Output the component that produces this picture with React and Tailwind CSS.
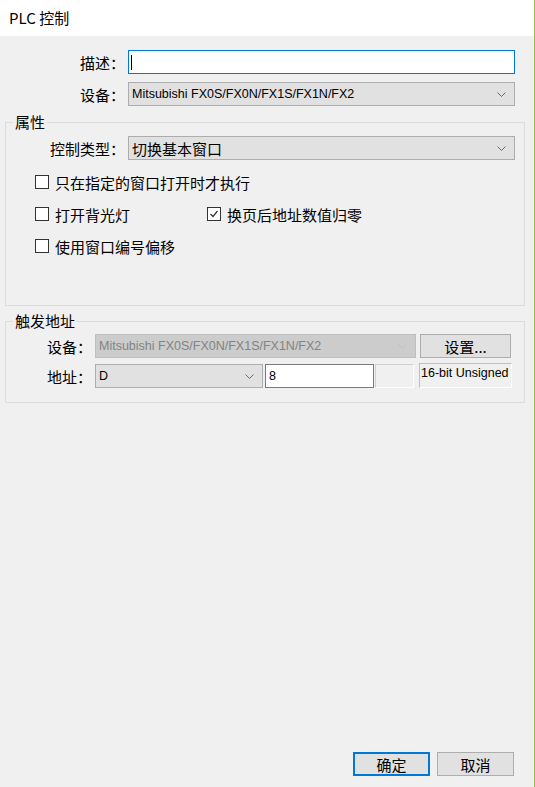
import React from 'react';

const Chevron = ({ color = '#6b6b6b' }) => (
    <svg width="9" height="5" viewBox="0 0 9 5" className="shrink-0">
        <path d="M0.5 0.5 L4.5 4.5 L8.5 0.5" fill="none" stroke={color} strokeWidth="1" />
    </svg>
);

const Combo = ({ value, width, disabled, cjk }) => (
    <div
        className={`h-[24px] flex items-center justify-between pl-[3px] pr-[8px] border ${width} ${disabled ? 'bg-[#cccccc] border-[#bfbfbf] text-[#838383]' : 'bg-[#e1e1e1] border-[#adadad] text-black'} ${cjk ? "text-[15px] font-['Noto_Sans_CJK_SC',sans-serif]" : "text-[12.5px] font-['Liberation_Sans',Arial,sans-serif]"}`}
    >
        <span className="leading-none">{value}</span>
        <Chevron color={disabled ? '#bfbfbf' : '#6b6b6b'} />
    </div>
);

const Check = ({ checked, label, className = '' }) => (
    <div className={`h-[20px] flex items-center gap-[6px] ${className}`}>
        <div className="shrink-0 w-[14px] h-[14px] border border-[#333333] bg-white flex items-center justify-center">
            {checked && (
                <svg width="12" height="12" viewBox="0 0 12 12">
                    <path d="M2.5 6 L5 8.5 L9.5 3" fill="none" stroke="#333333" strokeWidth="1.2" />
                </svg>
            )}
        </div>
        <span className="text-[15px] leading-none">{label}</span>
    </div>
);

const Legend = ({ children }) => (
    <legend className="ml-[7px] px-[2px] text-[15px] leading-[18px]">{children}</legend>
);

export default function App() {
    return (
        <div className="w-[535px] h-[787px] flex font-['Noto_Sans_CJK_SC',sans-serif] text-black">
            <div className="w-[534px] flex flex-col">
                <div className="h-[36px] bg-white flex items-center pl-[9px] text-[15px]">PLC 控制</div>

                <div className="flex-1 bg-[#f0f0f0] flex flex-col pt-[14px]">
                    <div className="flex items-center">
                        <span className="w-[125px] text-right text-[15px] leading-none">描述：</span>
                        <div className="ml-[3px] w-[387px] h-[24px] border border-[#0078d7] bg-white flex items-center pl-[2px]">
                            <div className="w-px h-[15px] bg-black" />
                        </div>
                    </div>

                    <div className="flex items-center mt-[8px]">
                        <span className="w-[125px] text-right text-[15px] leading-none">设备：</span>
                        <div className="ml-[3px]">
                            <Combo value="Mitsubishi FX0S/FX0N/FX1S/FX1N/FX2" width="w-[387px]" />
                        </div>
                    </div>

                    <fieldset className="mt-[7px] ml-[5px] w-[520px] border border-[#dcdcdc] pb-[49px]">
                        <Legend>属性</Legend>
                        <div className="flex items-center mt-[5px]">
                            <span className="w-[119px] text-right text-[15px] leading-none">控制类型：</span>
                            <div className="ml-[3px]">
                                <Combo value="切换基本窗口" width="w-[387px]" cjk />
                            </div>
                        </div>
                        <div className="pl-[29px]">
                            <Check label="只在指定的窗口打开时才执行" className="mt-[12px]" />
                            <div className="flex mt-[12px]">
                                <Check label="打开背光灯" className="w-[172px]" />
                                <Check label="换页后地址数值归零" checked />
                            </div>
                            <Check label="使用窗口编号偏移" className="mt-[12px]" />
                        </div>
                    </fieldset>

                    <fieldset className="mt-[6px] ml-[5px] w-[520px] border border-[#dcdcdc] pb-[14px]">
                        <Legend>触发地址</Legend>
                        <div className="flex items-center mt-[4px]">
                            <span className="w-[86px] text-right text-[15px] leading-none">设备：</span>
                            <div className="ml-[3px]">
                                <Combo value="Mitsubishi FX0S/FX0N/FX1S/FX1N/FX2" width="w-[321px]" disabled />
                            </div>
                            <div className="ml-[4px] w-[91px] h-[24px] border border-[#adadad] bg-[#e1e1e1] flex items-center justify-center text-[15px] leading-none">
                                设置...
                            </div>
                        </div>
                        <div className="flex items-center mt-[6px]">
                            <span className="w-[86px] text-right text-[15px] leading-none">地址：</span>
                            <div className="ml-[3px]">
                                <Combo value="D" width="w-[168px]" />
                            </div>
                            <div className="ml-[2px] w-[109px] h-[24px] border border-[#7a7a7a] bg-white flex items-center pl-[3px] text-[12.5px] font-['Liberation_Sans',Arial,sans-serif]">
                                8
                            </div>
                            <div className="ml-px w-[39px] h-[24px] border-t border-l border-[#d0d0d0] border-r-white border-b-white border-r border-b" />
                            <div className="ml-[5px] w-[93px] h-[25px] -mt-[2px] border-t border-l border-[#c0c0c0] border-r border-b border-r-white border-b-white pl-px pt-[2px] text-[12.5px] leading-[15px] font-['Liberation_Sans',Arial,sans-serif]">
                                16-bit Unsigned
                            </div>
                        </div>
                    </fieldset>

                    <div className="mt-auto flex justify-end gap-[7px] pr-[20px] pb-[11px]">
                        <div className="w-[77px] h-[24px] border-2 border-[#0078d7] bg-[#e1e1e1] flex items-center justify-center text-[15px] leading-none">
                            确定
                        </div>
                        <div className="w-[77px] h-[24px] border border-[#adadad] bg-[#e1e1e1] flex items-center justify-center text-[15px] leading-none">
                            取消
                        </div>
                    </div>
                </div>
            </div>
            <div className="w-px bg-[#9dc23b]" />
        </div>
    );
}
